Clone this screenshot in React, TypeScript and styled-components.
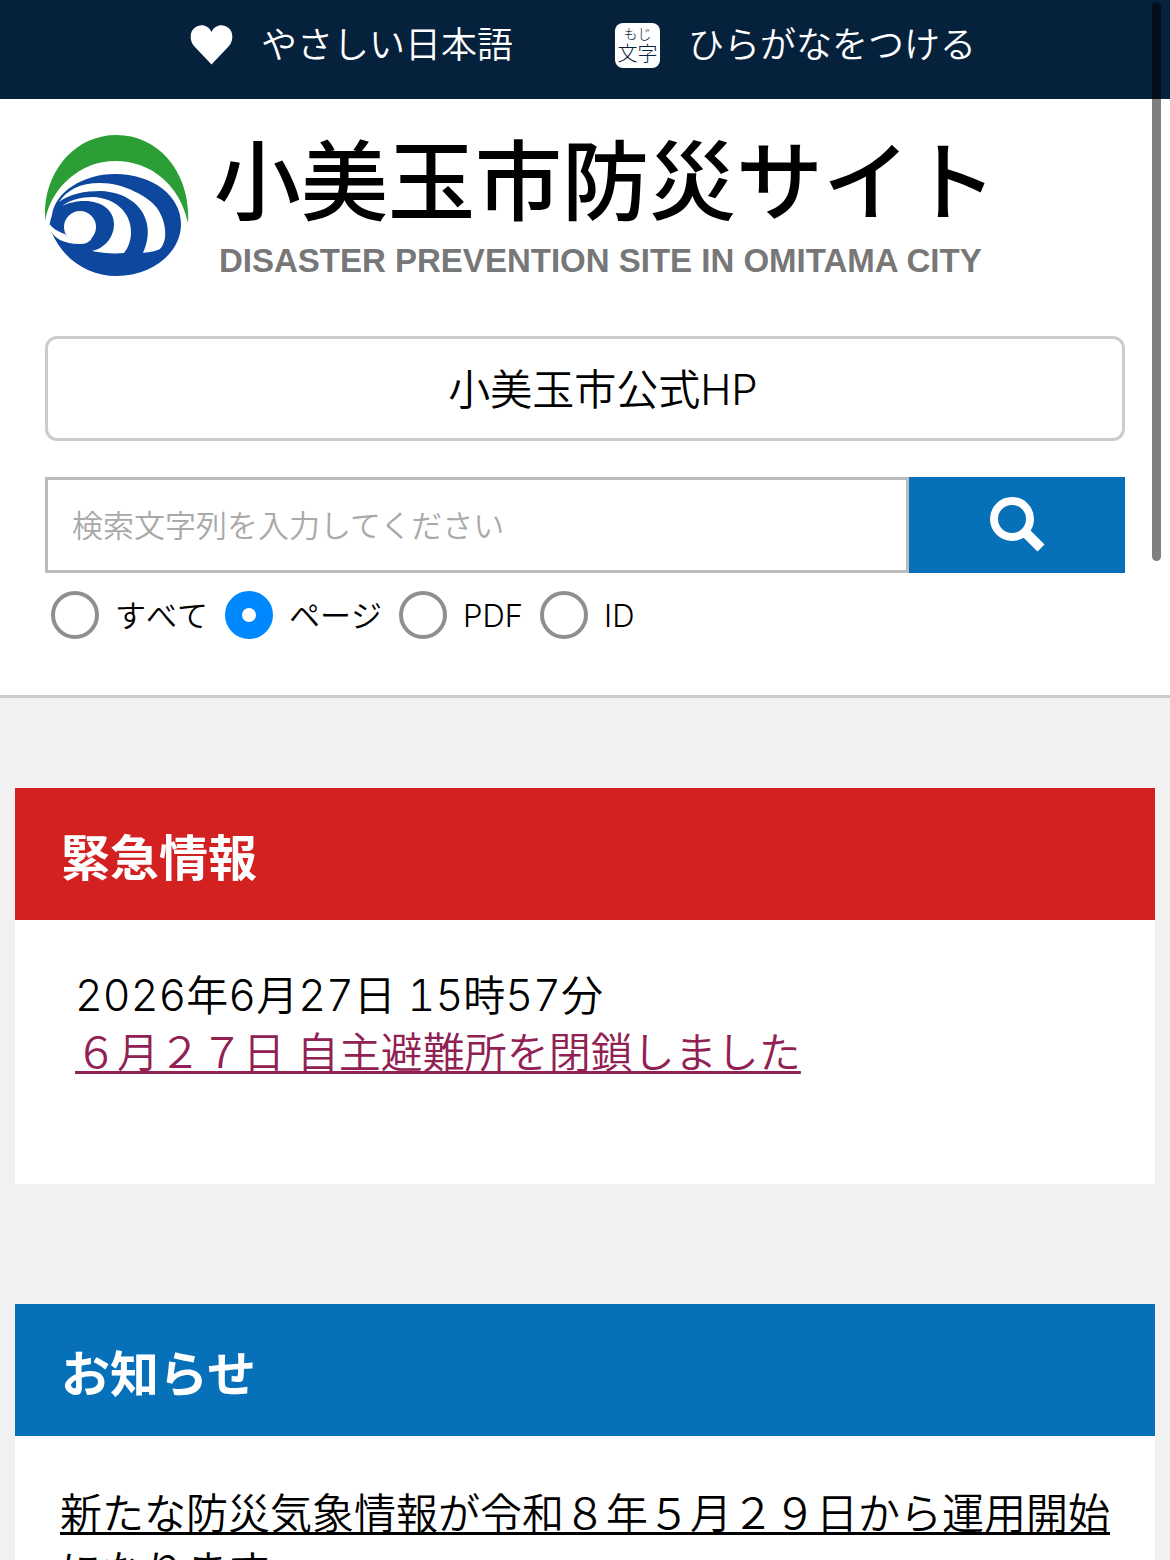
import React, { useState } from "react";
import styled, { createGlobalStyle } from "styled-components";

const jp = `Inter, "Noto Sans CJK JP", "Noto Sans", sans-serif`;

const GlobalStyle = createGlobalStyle`
  *, *::before, *::after { box-sizing: border-box; }
  body {
    margin: 0;
    background: #f1f1f1;
    color: #000;
    font-family: ${jp};
    font-weight: 350;
    font-size: 42px;
    line-height: 57px;
  }
  h1, h2, p { margin: 0; }
`;

const Page = styled.div`
  position: relative;
  height: 100vh;
  overflow: hidden;
`;

const TopBar = styled.nav`
  display: flex;
  justify-content: center;
  gap: 102px;
  height: 99px;
  padding: 18px 4px 0 0;
  background: #05213c;
`;

const TopLink = styled.a`
  display: flex;
  align-items: center;
  gap: 28px;
  height: 54px;
  color: #fff;
  font-size: 36px;
  text-decoration: none;
`;

const MojiBadge = styled.span`
  display: flex;
  flex-direction: column;
  align-items: center;
  justify-content: center;
  width: 45px;
  height: 45px;
  border-radius: 8px;
  background: #fff;
  color: #05213c;
  font-size: 20px;
  font-weight: 300;
  line-height: 22px;
  white-space: nowrap;
`;

const MojiRuby = styled.span`
  font-size: 14px;
  line-height: 18px;
`;

const Header = styled.header`
  padding: 36px 45px 56px;
  border-bottom: 3px solid #ccc;
  background: #fff;
`;

const Brand = styled.a`
  display: flex;
  align-items: flex-start;
  gap: 25px;
  color: #000;
  text-decoration: none;
`;

const Mark = styled.svg`
  flex: none;
  width: 144px;
  height: 141px;
`;

const BrandText = styled.div`
  white-space: nowrap;
`;

const SiteName = styled.h1`
  font-size: 87px;
  font-weight: 500;
  line-height: 96px;
`;

const SiteNameEn = styled.p`
  padding-left: 5px;
  color: #777;
  font-family: "Liberation Sans", Arial, sans-serif;
  font-size: 33px;
  font-weight: 700;
  line-height: 60px;
`;

const OfficialLink = styled.a`
  display: flex;
  align-items: center;
  justify-content: center;
  height: 105px;
  margin-top: 45px;
  padding: 2px 0 0 36px;
  border: 3px solid #ccc;
  border-radius: 12px;
  color: #000;
  text-decoration: none;
`;

const SearchRow = styled.div`
  display: grid;
  grid-template-columns: 4fr 1fr;
  height: 96px;
  margin-top: 36px;
`;

const SearchInput = styled.input`
  width: 100%;
  min-width: 0;
  padding: 0 24px;
  border: 3px solid #bbb;
  border-radius: 0;
  background: #fff;
  font: inherit;
  font-size: 31px;
  &::placeholder { color: #a9a9a9; opacity: 1; }
`;

const SearchButton = styled.button`
  display: flex;
  align-items: center;
  justify-content: center;
  padding: 0;
  border: 0;
  background: #0671b9;
`;

const Scope = styled.fieldset`
  display: flex;
  gap: 17px;
  margin: 18px 0 0;
  padding: 0 6px;
  border: 0;
`;

const ScopeLabel = styled.label`
  display: flex;
  align-items: center;
  gap: 16px;
  height: 48px;
  font-size: 31px;
  font-kerning: none;
`;

const Radio = styled.input`
  appearance: none;
  width: 48px;
  height: 48px;
  margin: 0;
  border: 4px solid #8e8e93;
  border-radius: 50%;
  background: #fff;
  &:checked { border: 17px solid #0088ff; }
`;

const Main = styled.main`
  display: flex;
  flex-direction: column;
  gap: 120px;
  padding: 90px 15px;
`;

const Panel = styled.section`
  background: #fff;
`;

const PanelTitle = styled.h2<{ $tone: string }>`
  display: flex;
  align-items: center;
  height: 132px;
  padding: 8px 46px 0;
  background: ${(p) => p.$tone};
  color: #fff;
  font-size: 49px;
  font-weight: 700;
`;

const Urgent = styled.div`
  padding: 47px 60px 103px;
`;

const Digits = styled.span`
  font-size: 43px;
  font-variant-numeric: tabular-nums;
  line-height: 1;
`;

const News = styled.div`
  padding: 49px 45px;
`;

const TextLink = styled.a<{ $tone: string }>`
  color: ${(p) => p.$tone};
  text-decoration-thickness: 3px;
  text-underline-offset: 3px;
  text-decoration-skip-ink: none;
`;

const ScrollThumb = styled.div`
  position: absolute;
  top: 2px;
  right: 9px;
  width: 9px;
  height: 559px;
  border-radius: 5px;
  background: rgba(0, 0, 0, 0.5);
`;

const scopes = ["すべて", "ページ", "PDF", "ID"];

function HeartIcon() {
  return (
    <svg width="43" height="40" viewBox="0 0 43 40" aria-hidden="true">
      <path
        fill="#fff"
        d="M21.500 39.500 4 21C-1 15 0 6 4.500 3 10-1.500 18-.5 21.500 7 25-.5 33-1.500 38.500 3 43 6 44 15 39 21Z"
      />
    </svg>
  );
}

function CityMark() {
  return (
    <Mark viewBox="0 0 144 141" aria-hidden="true">
      <path fill="#2c9e36" d="M0 86C-3 38 29 0 71.500 0S146 38 143 88C135 50 106 26 70 26 36 26 6 52 0 86Z" />
      <path
        fill="#0d479e"
        d="M7 80C10 57 38 39 70 39c38 0 66 22 66 50 0 29-29 52-64.500 52-29 0-54-17-65.500-45C3 90 6 84 7 80Z"
      />
      <circle cx="35" cy="92" r="16" fill="#fff" />
      <path fill="#fff" d="M2 86c5 7 11 11 18 13 4 5 10 9 15 9l12-5c-3 5-7 6-13 6-14 0-25-5-30-16Z" />
      <path
        fill="#fff"
        d="M17 71C25 65 36 62 48 62c22 1 38 15 38 35 0 9-3 16-7 21-10 1-22 0-32-2 14-3 22-15 22-27 0-14-13-23-29-23-9 0-17 2-23 5Z"
      />
      <path
        fill="#fff"
        d="M14 67C22 55 35 48 55 48c24 0 49 14 57 25 7 10 9 21 8 30-1 5-3 9-5 11-4 2-9 3-17 4 4-9 6-19 4-29C98 69 79 57 56 56c-16 0-32 3-42 11Z"
      />
    </Mark>
  );
}

function SearchIcon() {
  return (
    <svg width="56" height="56" viewBox="0 0 56 56" aria-hidden="true">
      <g fill="none" stroke="#fff">
        <circle cx="23" cy="22" r="18" strokeWidth="8" />
        <path d="M35 34 52 51" strokeWidth="10" />
      </g>
    </svg>
  );
}

export default function App() {
  const [scope, setScope] = useState("ページ");
  return (
    <Page>
      <GlobalStyle />
      <TopBar>
        <TopLink href="#easy">
          <HeartIcon />
          やさしい日本語
        </TopLink>
        <TopLink href="#ruby">
          <MojiBadge>
            <MojiRuby>もじ</MojiRuby>
            文字
          </MojiBadge>
          ひらがなをつける
        </TopLink>
      </TopBar>
      <Header>
        <Brand href="#top">
          <CityMark />
          <BrandText>
            <SiteName>小美玉市防災サイト</SiteName>
            <SiteNameEn>DISASTER PREVENTION SITE IN OMITAMA CITY</SiteNameEn>
          </BrandText>
        </Brand>
        <OfficialLink href="#official">小美玉市公式HP</OfficialLink>
        <form onSubmit={(e) => e.preventDefault()}>
          <SearchRow>
            <SearchInput type="text" aria-label="検索" placeholder="検索文字列を入力してください" />
            <SearchButton type="submit" aria-label="検索">
              <SearchIcon />
            </SearchButton>
          </SearchRow>
          <Scope>
            {scopes.map((s) => (
              <ScopeLabel key={s}>
                <Radio type="radio" name="scope" value={s} checked={scope === s} onChange={() => setScope(s)} />
                {s}
              </ScopeLabel>
            ))}
          </Scope>
        </form>
      </Header>
      <Main>
        <Panel>
          <PanelTitle $tone="#d32122">緊急情報</PanelTitle>
          <Urgent>
            <p>
              <Digits>2026</Digits>年<Digits>6</Digits>月<Digits>27</Digits>日 <Digits>15</Digits>時
              <Digits>57</Digits>分
            </p>
            <p>
              <TextLink $tone="#922153" href="#shelter">
                ６月２７日 自主避難所を閉鎖しました
              </TextLink>
            </p>
          </Urgent>
        </Panel>
        <Panel>
          <PanelTitle $tone="#0671b9">お知らせ</PanelTitle>
          <News>
            <TextLink $tone="#000" href="#news">
              新たな防災気象情報が令和８年５月２９日から運用開始になります
            </TextLink>
          </News>
        </Panel>
      </Main>
      <ScrollThumb />
    </Page>
  );
}
